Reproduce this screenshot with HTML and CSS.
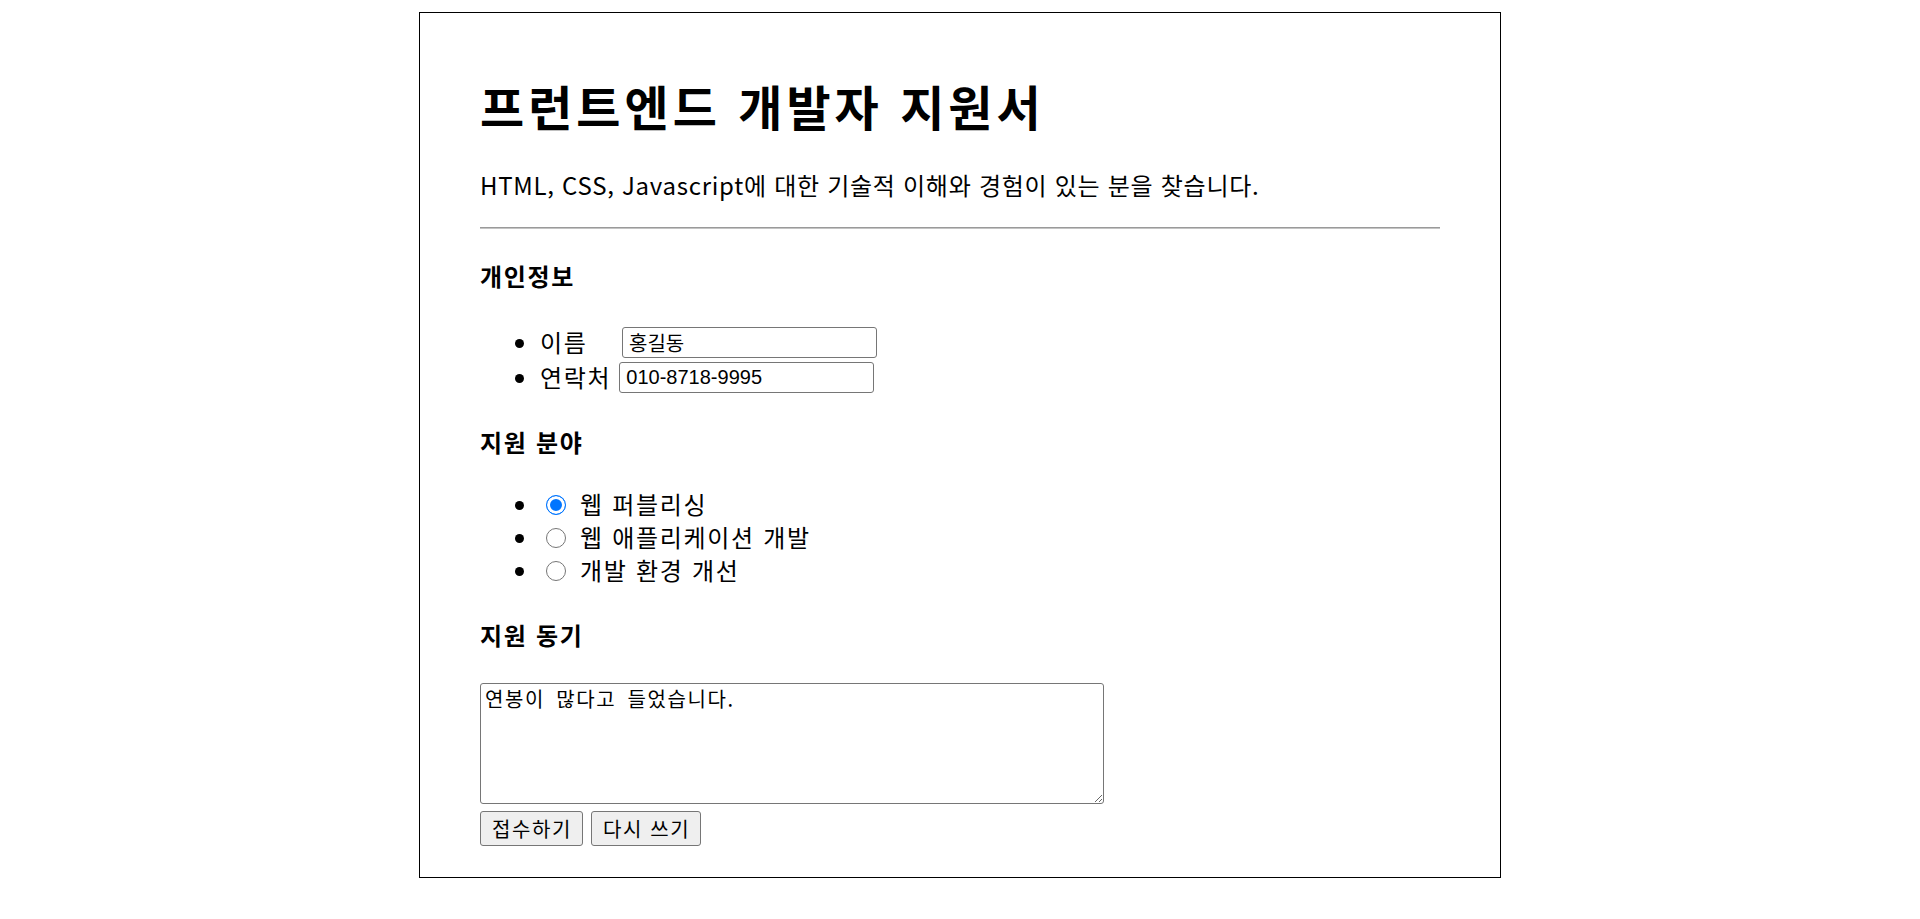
FILE: index.html
```html
<!DOCTYPE html>
<html lang="ko">
<head>
<meta charset="utf-8">
<title>프런트엔드 개발자 지원서</title>
<link rel="stylesheet" href="styles.css">
</head>
<body>
<div class="sheet">
  <h1 class="title">프런트엔드 개발자 지원서</h1>
  <p class="lead">HTML, CSS, Javascript에 대한 기술적 이해와 경험이 있는 분을 찾습니다.</p>
  <hr class="divider">
  <form class="form">
    <h2 class="section section-intro">개인정보</h2>
    <ul class="fields">
      <li class="field"><label class="label label-name" for="name">이름</label><input class="text" id="name" type="text" value="홍길동"></li>
      <li class="field"><label class="label" for="tel">연락처</label><input class="text" id="tel" type="text" value="010-8718-9995"></li>
    </ul>
    <h2 class="section">지원 분야</h2>
    <ul class="options">
      <li class="option"><input class="radio" type="radio" name="part" id="p1" checked><label class="opt-label" for="p1">웹 퍼블리싱</label></li>
      <li class="option"><input class="radio" type="radio" name="part" id="p2"><label class="opt-label" for="p2">웹 애플리케이션 개발</label></li>
      <li class="option"><input class="radio" type="radio" name="part" id="p3"><label class="opt-label" for="p3">개발 환경 개선</label></li>
    </ul>
    <h2 class="section section-motive">지원 동기</h2>
    <textarea class="motive">연봉이 많다고 들었습니다.</textarea>
    <div class="actions">
      <button type="submit" class="btn">접수하기</button>
      <button type="reset" class="btn">다시 쓰기</button>
    </div>
  </form>
</div>
</body>
</html>
```

FILE: styles.css
```css
html, body {
  margin: 0;
}
body {
  padding: 12px 0;
  background: #fff;
  color: #000;
  font-family: "Noto Sans CJK KR", "Noto Sans", sans-serif;
  font-size: 24px;
}
.sheet {
  width: 960px;
  margin: 0 auto;
  padding: 28px 60px 31px;
  border: 1px solid #000;
}
.title {
  margin: 32px 0 32px;
  font-size: 48px;
  line-height: 64px;
  font-weight: 700;
  letter-spacing: 4px;
}
.lead {
  margin: 0;
  font-size: 24px;
  line-height: 32px;
  letter-spacing: 0.72px;
}
.divider {
  margin: 26px 0 0;
  height: 0;
  border: 0;
  border-top: 1px solid #9a9a9a;
  border-bottom: 1px solid #c4c4c4;
}
.form {
  margin: 0;
}
.section {
  margin: 0;
  font-size: 24px;
  line-height: 32px;
  font-weight: 700;
  letter-spacing: 1.7px;
}
.section-intro {
  margin-top: 31px;
}
.section-motive {
  margin-bottom: 32px;
}
.fields, .options {
  padding-left: 60px;
}
.fields {
  margin: 32px 0 32px;
}
.options {
  margin: 29px 0 33px;
}
.field {
  line-height: 35px;
  letter-spacing: 1.7px;
}
.label {
  display: inline-block;
  margin-right: 8px;
}
.label-name {
  width: 74px;
}
.text {
  box-sizing: border-box;
  width: 255px;
  height: 31px;
  margin-top: 3px;
  padding: 1px 6px;
  border: 1px solid #767676;
  border-radius: 3px;
  font-family: "Liberation Sans", "Noto Sans CJK KR", sans-serif;
  font-size: 20px;
  letter-spacing: normal;
  color: #000;
  vertical-align: top;
}
.option {
  line-height: 33px;
  letter-spacing: 1.7px;
}
.radio {
  appearance: none;
  -webkit-appearance: none;
  box-sizing: border-box;
  width: 20px;
  height: 20px;
  margin: 0 14px 0 6px;
  border: 1.5px solid #767676;
  border-radius: 50%;
  background: #fff;
  vertical-align: -1px;
}
.radio:checked {
  border-color: #0075ff;
  background: #0075ff;
  box-shadow: inset 0 0 0 3px #fff;
}
.motive {
  display: block;
  box-sizing: border-box;
  width: 624px;
  height: 121px;
  margin: 0 0 7px;
  padding: 3px 4px;
  border: 1px solid #767676;
  border-radius: 3px;
  font-family: "Noto Sans CJK KR", monospace;
  font-size: 20px;
  line-height: 24px;
  letter-spacing: 1.6px;
  word-spacing: 4px;
  color: #000;
}
.actions {
  display: flex;
  gap: 8px;
}
.btn {
  box-sizing: border-box;
  height: 35px;
  padding: 0 10px 0 11px;
  border: 1px solid #767676;
  border-radius: 3px;
  background: #efefef;
  font-family: "Noto Sans CJK KR", sans-serif;
  font-size: 20px;
  letter-spacing: 1.6px;
  color: #000;
}
```
